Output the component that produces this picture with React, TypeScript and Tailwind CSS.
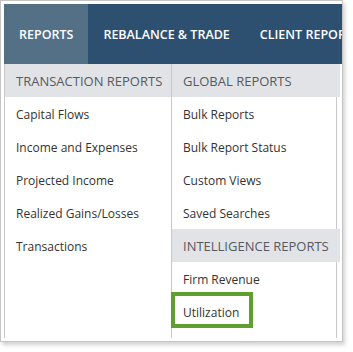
const tabs = ['REPORTS', 'REBALANCE & TRADE', 'CLIENT REPORTING'];

const transactionReports = [
  'Capital Flows',
  'Income and Expenses',
  'Projected Income',
  'Realized Gains/Losses',
  'Transactions',
];

const globalReports = ['Bulk Reports', 'Bulk Report Status', 'Custom Views', 'Saved Searches'];

const intelligenceReports = ['Firm Revenue', 'Utilization'];

function Header({ label }: { label: string }) {
  return (
    <div className="h-[33px] flex items-center px-[11px] pt-[3px] bg-[#e2e3e7] text-[#555a60] text-[13px] whitespace-nowrap">
      {label}
    </div>
  );
}

function Item({ label, highlight }: { label: string; highlight?: boolean }) {
  return (
    <div className="relative h-[33px] flex items-center px-[11px] pt-[3px] text-[#333] text-[12px] whitespace-nowrap">
      {label}
      {highlight && (
        <div className="absolute -top-[3px] -left-[1px] w-[82px] h-[36px] border-4 border-[#5e9f2f]" />
      )}
    </div>
  );
}

export default function App() {
  return (
    <div className="w-[353px] h-[352px] bg-white" style={{ fontFamily: '"Open Sans", "Noto Sans", sans-serif' }}>
      <div className="w-[343px] h-[342px] border border-[#c4c4c4] bg-white pl-[3px] pt-[3px] shadow-[2px_3px_4px_rgba(0,0,0,0.18)] overflow-hidden">
        {/* Top nav */}
        <div className="w-[338px] h-[60px] bg-[#2d4f70] flex overflow-hidden">
          {tabs.map((tab, i) => (
            <div
              key={tab}
              className={`h-full flex items-center px-[15px] pt-[2px] text-white text-[12.5px] font-semibold whitespace-nowrap ${
                i === 0 ? 'bg-[#537086]' : ''
              }`}
            >
              {tab}
            </div>
          ))}
        </div>

        {/* Dropdown */}
        <div className="w-[333px] h-[274px] border-x border-[#c8c8c8] flex">
          <div className="w-[167px] border-r border-[#c8c8c8]">
            <Header label="TRANSACTION REPORTS" />
            {transactionReports.map((r) => (
              <Item key={r} label={r} />
            ))}
          </div>
          <div className="flex-1">
            <Header label="GLOBAL REPORTS" />
            {globalReports.map((r) => (
              <Item key={r} label={r} />
            ))}
            <Header label="INTELLIGENCE REPORTS" />
            {intelligenceReports.map((r) => (
              <Item key={r} label={r} highlight={r === 'Utilization'} />
            ))}
          </div>
        </div>
      </div>
    </div>
  );
}
